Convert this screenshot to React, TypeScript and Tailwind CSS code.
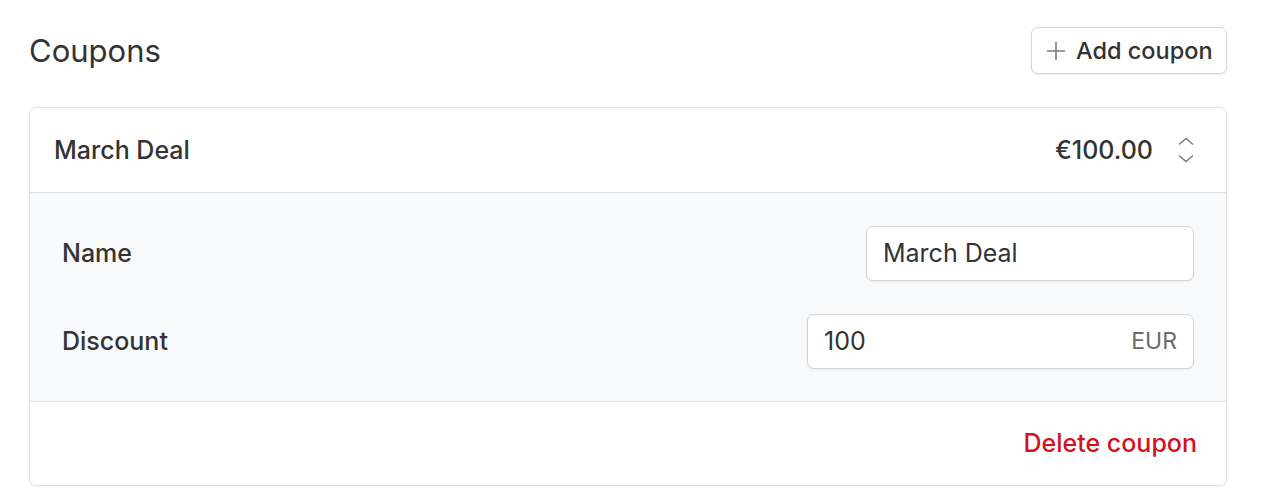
import React from "react";

export default function App() {
  return (
    <div className="w-[1264px] h-[504px] bg-white text-[#333333]" style={{ fontFamily: "Inter, 'Noto Sans', sans-serif" }}>
      <div className="pl-[29px] pr-[37px] pt-[27px]">
        <div className="flex items-center justify-between h-[47px]">
          <h1 className="text-[31px] font-normal text-[#333333] leading-none">Coupons</h1>
          <button className="flex items-center h-[47px] w-[196px] pl-[15px] gap-[11px] rounded-[7px] border border-[#d6d6d6] bg-white shadow-[0_1px_2px_rgba(0,0,0,0.08)]">
            <svg width="18" height="18" viewBox="0 0 18 18" fill="none" stroke="#7a7a7a" strokeWidth="1.6">
              <path d="M9 0v18M0 9h18" />
            </svg>
            <span className="text-[23.5px] font-[450] text-[#333333] leading-none">Add coupon</span>
          </button>
        </div>
        <div className="mt-[33px] rounded-[7px] border border-[#e2e2e2] bg-white overflow-hidden shadow-[0_1px_3px_rgba(0,0,0,0.05)]">
          <div className="flex items-center justify-between h-[84px] pl-[24px] pr-[32px]">
            <span className="text-[25px] font-[450] leading-none">March Deal</span>
            <div className="flex items-center gap-[25px]">
              <span className="text-[25px] font-[450] leading-none">€100.00</span>
              <svg width="16" height="26" viewBox="0 0 16 26" fill="none" stroke="#7a7a7a" strokeWidth="1.5">
                <path d="M1 7.5L8 1.5L15 7.5" />
                <path d="M1 18.5L8 24.5L15 18.5" />
              </svg>
            </div>
          </div>
          <div className="border-t border-b border-[#e2e2e2] bg-[#f8f9fb] px-[32px] pt-[33px] pb-[32px] flex flex-col gap-[33px]">
            <div className="flex items-center justify-between">
              <span className="text-[25px] font-[450] leading-none">Name</span>
              <div className="w-[328px] h-[55px] rounded-[7px] border border-[#d4d4d4] bg-white flex items-center px-[16px] shadow-[0_1px_2px_rgba(0,0,0,0.06)]">
                <span className="text-[25px] leading-none text-[#333333]">March Deal</span>
              </div>
            </div>
            <div className="flex items-center justify-between">
              <span className="text-[25px] font-[450] leading-none">Discount</span>
              <div className="w-[387px] h-[55px] rounded-[7px] border border-[#d4d4d4] bg-white flex items-center justify-between px-[16px] shadow-[0_1px_2px_rgba(0,0,0,0.06)]">
                <span className="text-[25px] leading-none text-[#333333]">100</span>
                <span className="text-[23px] leading-none text-[#6b6b6b]">EUR</span>
              </div>
            </div>
          </div>
          <div className="h-[83px] flex items-center justify-end pr-[29px]">
            <span className="text-[25px] font-[450] leading-none text-[#d3121c]">Delete coupon</span>
          </div>
        </div>
      </div>
    </div>
  );
}
